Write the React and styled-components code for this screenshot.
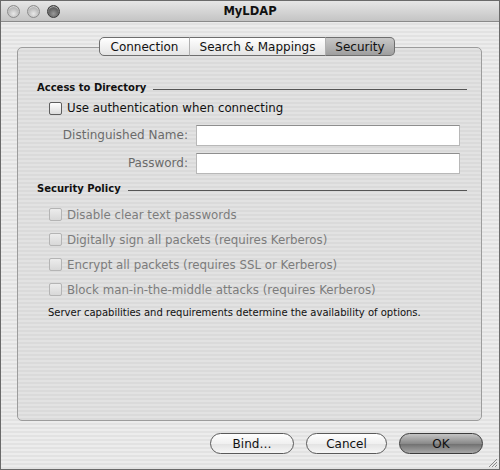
import React from "react";
import styled, { createGlobalStyle } from "styled-components";

const GlobalStyle = createGlobalStyle`
    html, body {
        margin: 0;
        padding: 0;
        background: #ffffff;
    }
    * {
        box-sizing: border-box;
    }
`;

const Window = styled.div`
    width: 500px;
    height: 470px;
    display: flex;
    flex-direction: column;
    border: 1px solid #6a6a6a;
    font-family: "DejaVu Sans", "Liberation Sans", sans-serif;
    color: #111;
    background: repeating-linear-gradient(
        to bottom,
        #ececec 0px,
        #ececec 2px,
        #e2e2e2 2px,
        #e2e2e2 4px
    );
    position: relative;
`;

const TitleBar = styled.div`
    height: 21px;
    flex-shrink: 0;
    display: flex;
    align-items: center;
    position: relative;
    padding-left: 6px;
    gap: 7px;
    background: linear-gradient(to bottom, #e6e6e6, #c4c4c4);
    border-bottom: 1px solid #8a8a8a;
`;

const Light = styled.span`
    width: 13px;
    height: 13px;
    border-radius: 50%;
    border: 1px solid ${(p) => (p.dark ? "#3a3a3a" : "#8c8c8c")};
    background: radial-gradient(
        circle at 50% 70%,
        ${(p) => (p.dark ? "#9a9a9a" : "#e8e8e8")} 0%,
        ${(p) => (p.dark ? "#4a4a4a" : "#a8a8a8")} 80%
    );
    box-shadow: inset 0 1px 1px rgba(255, 255, 255, 0.6);
`;

const Title = styled.div`
    position: absolute;
    left: 0;
    right: 0;
    text-align: center;
    font-size: 11.5px;
    font-weight: bold;
    color: #111;
    pointer-events: none;
`;

const Body = styled.div`
    flex: 1;
    display: flex;
    flex-direction: column;
    padding: 15px 17px 0 16px;
`;

const TabRow = styled.div`
    display: flex;
    justify-content: center;
    margin-bottom: -9px;
    position: relative;
    z-index: 1;
    padding-right: 5px;
`;

const Tab = styled.div`
    height: 19px;
    width: ${(p) => p.w}px;
    display: flex;
    align-items: center;
    justify-content: center;
    font-size: 12px;
    border: 1px solid #6e6e6e;
    border-left: ${(p) => (p.first ? "1px solid #6e6e6e" : "1px solid #b0b0b0")};
    border-radius: ${(p) =>
        p.first ? "5px 0 0 5px" : p.last ? "0 5px 5px 0" : "0"};
    background: ${(p) =>
        p.active
            ? "linear-gradient(to bottom, #c8c8c8, #9e9e9e)"
            : "linear-gradient(to bottom, #ffffff, #e4e4e4)"};
    & + & {
        margin-left: -1px;
    }
`;

const Panel = styled.div`
    height: 374px;
    border: 1px solid #9c9c9c;
    border-radius: 5px;
    background: repeating-linear-gradient(
        to bottom,
        #e2e2e2 0px,
        #e2e2e2 2px,
        #dadada 2px,
        #dadada 4px
    );
    padding: 34px 14px 0 19px;
    display: flex;
    flex-direction: column;
`;

const SectionHead = styled.div`
    display: flex;
    align-items: center;
    font-size: 10px;
    font-weight: bold;
    margin-top: ${(p) => p.top || 0}px;
    &::after {
        content: "";
        flex: 1;
        height: 1px;
        margin: 4px 0 0 7px;
        background: #555;
    }
`;

const CheckRow = styled.label`
    display: flex;
    align-items: center;
    gap: 5px;
    font-size: 11.8px;
    height: ${(p) => p.h || 25}px;
    margin-top: ${(p) => p.top || 0}px;
    padding-left: 12px;
    color: ${(p) => (p.disabled ? "#7c7c7c" : "#111")};
`;

const Box = styled.span`
    width: 13px;
    height: 13px;
    border-radius: 2px;
    border: 1px solid ${(p) => (p.disabled ? "#b4b4b4" : "#5e5e5e")};
    background: ${(p) =>
        p.disabled
            ? "linear-gradient(to bottom, #ececec, #d8d8d8)"
            : "linear-gradient(to bottom, #ffffff, #dcdcdc)"};
`;

const FieldRow = styled.div`
    display: grid;
    grid-template-columns: 151px 1fr;
    column-gap: 8px;
    align-items: center;
    height: 28px;
`;

const FieldLabel = styled.div`
    text-align: right;
    font-size: 12px;
    color: #6a6a6a;
`;

const Input = styled.div`
    height: 21px;
    background: #fff;
    border: 1px solid #b8b8b8;
    border-top-color: #8e8e8e;
    margin-right: 7px;
`;

const Spacer = styled.div`
    height: ${(p) => p.h}px;
`;

const Note = styled.div`
    font-size: 10px;
    padding-left: 11px;
    margin-top: 5px;
`;

const ButtonRow = styled.div`
    display: flex;
    justify-content: flex-end;
    gap: 12px;
    padding: 12px 0 0 0;
    margin-right: -1px;
`;

const Button = styled.div`
    width: ${(p) => p.w || 84}px;
    height: 21px;
    border-radius: 11px;
    display: flex;
    align-items: center;
    justify-content: center;
    font-size: 12px;
    color: #111;
    border: 1px solid ${(p) => (p.primary ? "#3c3c3c" : "#5a5a5a")};
    background: ${(p) =>
        p.primary
            ? "linear-gradient(to bottom, #c4c4c4 0%, #8a8a8a 50%, #6e6e6e 51%, #a8a8a8 100%)"
            : "linear-gradient(to bottom, #ffffff 0%, #f0f0f0 50%, #e2e2e2 51%, #f6f6f6 100%)"};
`;

const Grip = styled.svg`
    position: absolute;
    right: 1px;
    bottom: 1px;
`;

const policies = [
    "Disable clear text passwords",
    "Digitally sign all packets (requires Kerberos)",
    "Encrypt all packets (requires SSL or Kerberos)",
    "Block man-in-the-middle attacks (requires Kerberos)",
];

export default function App() {
    return (
        <Window>
            <GlobalStyle />
            <TitleBar>
                <Light />
                <Light />
                <Light dark />
                <Title>MyLDAP</Title>
            </TitleBar>
            <Body>
                <TabRow>
                    <Tab first w={91}>Connection</Tab>
                    <Tab w={137}>Search &amp; Mappings</Tab>
                    <Tab last active w={70}>Security</Tab>
                </TabRow>
                <Panel>
                    <SectionHead>Access to Directory</SectionHead>
                    <CheckRow h={26} top={2}>
                        <Box />
                        Use authentication when connecting
                    </CheckRow>
                    <FieldRow>
                        <FieldLabel>Distinguished Name:</FieldLabel>
                        <Input />
                    </FieldRow>
                    <FieldRow>
                        <FieldLabel>Password:</FieldLabel>
                        <Input />
                    </FieldRow>
                    <SectionHead top={6}>Security Policy</SectionHead>
                    <Spacer h={8} />
                    {policies.map((p) => (
                        <CheckRow key={p} disabled>
                            <Box disabled />
                            {p}
                        </CheckRow>
                    ))}
                    <Note>
                        Server capabilities and requirements determine the
                        availability of options.
                    </Note>
                </Panel>
                <ButtonRow>
                    <Button>Bind…</Button>
                    <Button w={81}>Cancel</Button>
                    <Button primary>OK</Button>
                </ButtonRow>
            </Body>
            <Grip width="12" height="12" viewBox="0 0 12 12">
                <path d="M11 3 L3 11 M11 6 L6 11 M11 9 L9 11" stroke="#8a8a8a" strokeWidth="1" />
            </Grip>
        </Window>
    );
}
